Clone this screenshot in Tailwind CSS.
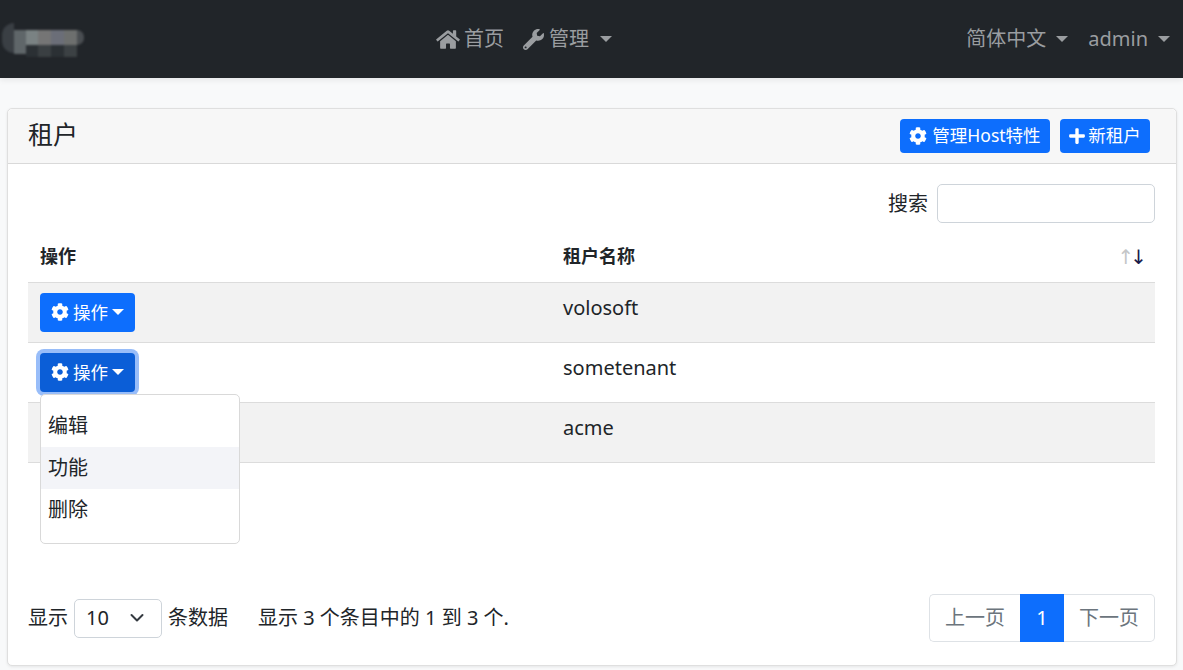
<!DOCTYPE html>
<html lang="zh-CN">

<head>
    <meta charset="UTF-8" />
    <meta name="viewport" content="width=device-width, initial-scale=1.0" />
    <title>租户</title>
    <script src="https://cdn.jsdelivr.net/npm/@tailwindcss/browser@4"></script>
</head>

<body class="bg-[#f8f9fa] text-[#212529] font-['Noto_Sans','Noto_Sans_CJK_SC',sans-serif] text-[20px] h-[670px] overflow-hidden">
    <!-- Navbar -->
    <nav class="relative h-[78px] bg-[#212529] shadow-[0_2px_6px_rgba(0,0,0,0.08)] flex items-center text-[#9a9da0]">
        <!-- blurred logo -->
        <div class="absolute left-[2px] top-[22px] w-[82px] h-[36px] flex blur-[1px]">
            <div class="w-[12px] h-[30px] mt-[1px] bg-[#3a3f44] rounded-l-full"></div>
            <div class="w-[13px] h-[24px] mt-[8px] bg-[#5f6669]"></div>
            <div class="flex flex-col">
                <div class="flex h-[15px] mt-[8px]">
                    <div class="w-[12px] bg-[#7a8283]"></div>
                    <div class="w-[13px] bg-[#757575]"></div>
                    <div class="w-[13px] bg-[#6b6e78]"></div>
                    <div class="w-[13px] bg-[#6d6f6e]"></div>
                    <div class="w-[7px] bg-[#4a4e52] rounded-r-full"></div>
                </div>
                <div class="flex h-[12px]">
                    <div class="w-[12px] bg-[#2b3034]"></div>
                    <div class="w-[13px] bg-[#3a3f42]"></div>
                    <div class="w-[13px] bg-[#2b3034]"></div>
                    <div class="w-[13px] bg-[#3c4144]"></div>
                </div>
            </div>
        </div>

        <div class="absolute left-[436px] top-[24px] flex items-center h-[30px]">
            <a class="flex items-center gap-[4px]">
                <svg class="w-[24px] h-[21px]" viewBox="0 0 576 512" fill="currentColor"><path d="M280.37 148.26L96 300.11V464a16 16 0 0 0 16 16l112.06-.29a16 16 0 0 0 15.92-16V368a16 16 0 0 1 16-16h64a16 16 0 0 1 16 16v95.64a16 16 0 0 0 16 16.05L464 480a16 16 0 0 0 16-16V300L295.67 148.26a12.19 12.19 0 0 0-15.3 0zM571.6 251.47L488 182.56V44.05a12 12 0 0 0-12-12h-56a12 12 0 0 0-12 12v72.61L318.47 43a48 48 0 0 0-61 0L4.34 251.47a12 12 0 0 0-1.6 16.9l25.5 31A12 12 0 0 0 45.15 301l235.22-193.74a12.19 12.19 0 0 1 15.3 0L530.9 301a12 12 0 0 0 16.9-1.6l25.5-31a12 12 0 0 0-1.7-16.93z"/></svg>
                <span>首页</span>
            </a>
            <a class="flex items-center gap-[5px] ml-[19px]">
                <svg class="w-[21px] h-[21px]" viewBox="0 0 512 512" fill="currentColor"><path d="M507.73 109.1c-2.24-9.03-13.54-12.09-20.12-5.51l-74.36 74.36-67.88-11.31-11.31-67.88 74.36-74.36c6.62-6.62 3.43-17.9-5.66-20.16-47.38-11.74-99.55.91-136.58 37.93-39.64 39.64-50.55 97.1-34.05 147.2L18.74 402.76c-24.99 24.99-24.99 65.51 0 90.5 24.99 24.99 65.51 24.99 90.5 0l213.21-213.21c50.12 16.71 107.47 5.68 147.37-34.22 37.07-37.07 49.7-89.32 37.91-136.73zM64 472c-13.25 0-24-10.75-24-24 0-13.26 10.75-24 24-24s24 10.74 24 24c0 13.25-10.75 24-24 24z"/></svg>
                <span>管理</span>
                <span class="ml-[6px] w-0 h-0 border-x-[6px] border-x-transparent border-t-[6px] border-t-[#9a9da0]"></span>
            </a>
        </div>

        <div class="ml-auto mr-[13px] flex items-center">
            <a class="flex items-center">
                <span>简体中文</span>
                <span class="ml-[10px] w-0 h-0 border-x-[6px] border-x-transparent border-t-[6px] border-t-[#9a9da0]"></span>
            </a>
            <a class="flex items-center ml-[20px]">
                <span>admin</span>
                <span class="ml-[10px] w-0 h-0 border-x-[6px] border-x-transparent border-t-[6px] border-t-[#9a9da0]"></span>
            </a>
        </div>
    </nav>

    <!-- Card -->
    <div class="mt-[30px] ml-[7px] w-[1170px] h-[558px] bg-white border border-[#dfdfdf] rounded-[5px] shadow-[0_1px_3px_rgba(0,0,0,0.08)] flex flex-col">
        <div class="h-[55px] shrink-0 bg-[#f7f7f7] border-b border-[#d9d9d9] rounded-t-[5px] flex items-center pl-[20px] pr-[26px]">
            <h2 class="text-[25px] leading-[30px] -mt-[4px]">租户</h2>
            <div class="ml-auto flex items-center gap-[10px] -mt-[1px]">
                <button class="h-[34px] w-[150px] bg-[#0d6efd] text-white text-[17.5px] rounded-[4px] flex items-center justify-center gap-[5px]">
                    <svg class="w-[18px] h-[18px]" viewBox="0 0 512 512" fill="currentColor"><path d="M487.4 315.7l-42.6-24.6c4.3-23.2 4.3-47 0-70.2l42.6-24.6c4.9-2.8 7.1-8.6 5.5-14-11.1-35.6-30-67.8-54.7-94.6-3.8-4.1-10-5.1-14.8-2.3L380.8 110c-17.9-15.4-38.5-27.3-60.8-35.1V25.8c0-5.6-3.9-10.5-9.4-11.7-36.7-8.2-74.3-7.8-109.2 0-5.5 1.2-9.4 6.1-9.4 11.7V75c-22.2 7.9-42.8 19.8-60.8 35.1L88.7 85.5c-4.9-2.8-11-1.9-14.8 2.3-24.7 26.7-43.6 58.9-54.7 94.6-1.7 5.4.6 11.2 5.5 14L67.3 221c-4.3 23.2-4.3 47 0 70.2l-42.6 24.6c-4.9 2.8-7.1 8.6-5.5 14 11.1 35.6 30 67.8 54.7 94.6 3.8 4.1 10 5.1 14.8 2.3l42.6-24.6c17.9 15.4 38.5 27.3 60.8 35.1v49.2c0 5.6 3.9 10.5 9.4 11.7 36.7 8.2 74.3 7.8 109.2 0 5.5-1.2 9.4-6.1 9.4-11.7v-49.2c22.2-7.9 42.8-19.8 60.8-35.1l42.6 24.6c4.9 2.8 11 1.9 14.8-2.3 24.7-26.7 43.6-58.9 54.7-94.6 1.5-5.5-.7-11.3-5.6-14.1zM256 336c-44.1 0-80-35.9-80-80s35.9-80 80-80 80 35.9 80 80-35.9 80-80 80z"/></svg>
                    <span>管理Host特性</span>
                </button>
                <button class="h-[34px] w-[90px] bg-[#0d6efd] text-white text-[17.5px] rounded-[4px] flex items-center justify-center gap-[3px]">
                    <svg class="w-[16px] h-[18px]" viewBox="0 0 448 512" fill="currentColor"><path d="M416 208H272V64c0-17.67-14.33-32-32-32h-32c-17.67 0-32 14.33-32 32v144H32c-17.67 0-32 14.33-32 32v32c0 17.67 14.33 32 32 32h144v144c0 17.67 14.33 32 32 32h32c17.67 0 32-14.33 32-32V304h144c17.67 0 32-14.33 32-32v-32c0-17.67-14.33-32-32-32z"/></svg>
                    <span>新租户</span>
                </button>
            </div>
        </div>

        <div class="flex-1 flex flex-col pl-[20px] pr-[21px]">
            <div class="mt-[20px] flex justify-end items-center gap-[9px]">
                <label>搜索</label>
                <input class="w-[218px] h-[39px] bg-white border border-[#ced4da] rounded-[5px]" />
            </div>

            <table class="relative mt-[9px] w-full table-fixed border-collapse">
                <thead>
                    <tr class="h-[50px] border-b border-[#dcdcdc]">
                        <th class="w-[523px] pl-[12px] text-left font-bold text-[18px]">操作</th>
                        <th class="pl-[12px] text-left font-bold text-[18px]">
                            <div class="flex items-center justify-between pr-[8px]">
                                <span>租户名称</span>
                                <span class="flex text-[20px] leading-none font-normal font-['DejaVu_Sans',sans-serif] tracking-[-4px] pr-[4px]"><span class="text-[#c4c6c8]">↑</span><span class="text-[#1b1b4b]">↓</span></span>
                            </div>
                        </th>
                    </tr>
                </thead>
                <tbody>
                    <tr class="h-[60px] bg-[#f2f2f2] border-b border-[#dcdcdc]">
                        <td class="pl-[12px] align-top pt-[10px]">
                            <button class="h-[39px] w-[95px] bg-[#0d6efd] text-white text-[17.5px] rounded-[4px] flex items-center justify-center gap-[4px]">
                                <svg class="w-[18px] h-[18px]" viewBox="0 0 512 512" fill="currentColor"><path d="M487.4 315.7l-42.6-24.6c4.3-23.2 4.3-47 0-70.2l42.6-24.6c4.9-2.8 7.1-8.6 5.5-14-11.1-35.6-30-67.8-54.7-94.6-3.8-4.1-10-5.1-14.8-2.3L380.8 110c-17.9-15.4-38.5-27.3-60.8-35.1V25.8c0-5.6-3.9-10.5-9.4-11.7-36.7-8.2-74.3-7.8-109.2 0-5.5 1.2-9.4 6.1-9.4 11.7V75c-22.2 7.9-42.8 19.8-60.8 35.1L88.7 85.5c-4.9-2.8-11-1.9-14.8 2.3-24.7 26.7-43.6 58.9-54.7 94.6-1.7 5.4.6 11.2 5.5 14L67.3 221c-4.3 23.2-4.3 47 0 70.2l-42.6 24.6c-4.9 2.8-7.1 8.6-5.5 14 11.1 35.6 30 67.8 54.7 94.6 3.8 4.1 10 5.1 14.8 2.3l42.6-24.6c17.9 15.4 38.5 27.3 60.8 35.1v49.2c0 5.6 3.9 10.5 9.4 11.7 36.7 8.2 74.3 7.8 109.2 0 5.5-1.2 9.4-6.1 9.4-11.7v-49.2c22.2-7.9 42.8-19.8 60.8-35.1l42.6 24.6c4.9 2.8 11 1.9 14.8-2.3 24.7-26.7 43.6-58.9 54.7-94.6 1.5-5.5-.7-11.3-5.6-14.1zM256 336c-44.1 0-80-35.9-80-80s35.9-80 80-80 80 35.9 80 80-35.9 80-80 80z"/></svg>
                                <span>操作</span>
                                <span class="w-0 h-0 border-x-[6px] border-x-transparent border-t-[6px] border-t-white"></span>
                            </button>
                        </td>
                        <td class="pl-[12px] align-top pt-[10px]">volosoft</td>
                    </tr>
                    <tr class="h-[60px] border-b border-[#dcdcdc]">
                        <td class="pl-[12px] align-top pt-[10px] relative">
                            <button class="h-[39px] w-[95px] bg-[#0b5ed7] text-white text-[17.5px] rounded-[4px] ring-[4px] ring-[#98bdf9] flex items-center justify-center gap-[4px]">
                                <svg class="w-[18px] h-[18px]" viewBox="0 0 512 512" fill="currentColor"><path d="M487.4 315.7l-42.6-24.6c4.3-23.2 4.3-47 0-70.2l42.6-24.6c4.9-2.8 7.1-8.6 5.5-14-11.1-35.6-30-67.8-54.7-94.6-3.8-4.1-10-5.1-14.8-2.3L380.8 110c-17.9-15.4-38.5-27.3-60.8-35.1V25.8c0-5.6-3.9-10.5-9.4-11.7-36.7-8.2-74.3-7.8-109.2 0-5.5 1.2-9.4 6.1-9.4 11.7V75c-22.2 7.9-42.8 19.8-60.8 35.1L88.7 85.5c-4.9-2.8-11-1.9-14.8 2.3-24.7 26.7-43.6 58.9-54.7 94.6-1.7 5.4.6 11.2 5.5 14L67.3 221c-4.3 23.2-4.3 47 0 70.2l-42.6 24.6c-4.9 2.8-7.1 8.6-5.5 14 11.1 35.6 30 67.8 54.7 94.6 3.8 4.1 10 5.1 14.8 2.3l42.6-24.6c17.9 15.4 38.5 27.3 60.8 35.1v49.2c0 5.6 3.9 10.5 9.4 11.7 36.7 8.2 74.3 7.8 109.2 0 5.5-1.2 9.4-6.1 9.4-11.7v-49.2c22.2-7.9 42.8-19.8 60.8-35.1l42.6 24.6c4.9 2.8 11 1.9 14.8-2.3 24.7-26.7 43.6-58.9 54.7-94.6 1.5-5.5-.7-11.3-5.6-14.1zM256 336c-44.1 0-80-35.9-80-80s35.9-80 80-80 80 35.9 80 80-35.9 80-80 80z"/></svg>
                                <span>操作</span>
                                <span class="w-0 h-0 border-x-[6px] border-x-transparent border-t-[6px] border-t-white"></span>
                            </button>
                            <!-- open dropdown -->
                            <div class="absolute z-10 left-[12px] top-[51px] w-[200px] h-[150px] bg-white border border-[#d9d9d9] rounded-[5px] pt-[10px] text-[#212529]">
                                <div class="h-[42px] pl-[7px] flex items-center">编辑</div>
                                <div class="h-[42px] pl-[7px] flex items-center bg-[#f3f4f8]">功能</div>
                                <div class="h-[42px] pl-[7px] flex items-center">删除</div>
                            </div>
                        </td>
                        <td class="pl-[12px] align-top pt-[10px]">sometenant</td>
                    </tr>
                    <tr class="h-[60px] bg-[#f2f2f2] border-b border-[#dcdcdc]">
                        <td class="pl-[12px] align-top pt-[10px]">
                            <button class="h-[39px] w-[95px] bg-[#0d6efd] rounded-[4px]"></button>
                        </td>
                        <td class="pl-[12px] align-top pt-[10px]">acme</td>
                    </tr>
                </tbody>
            </table>

            <!-- footer -->
            <div class="mt-auto mb-[23px] flex items-center h-[48px]">
                <span>显示</span>
                <div class="ml-[6px] w-[88px] h-[39px] border border-[#ced4da] rounded-[5px] flex items-center justify-between pl-[11px] pr-[17px]">
                    <span>10</span>
                    <svg class="w-[14px] h-[10px]" viewBox="0 0 14 10" fill="none" stroke="#343a40" stroke-width="2" stroke-linecap="round" stroke-linejoin="round"><path d="M1.5 2l5.5 5.5L12.5 2"/></svg>
                </div>
                <span class="ml-[6px]">条数据</span>
                <span class="ml-[30px]">显示 3 个条目中的 1 到 3 个.</span>

                <div class="ml-auto flex h-[48px] text-[#6c757d]">
                    <a class="w-[91px] border border-[#dee2e6] border-r-0 rounded-l-[5px] flex items-center justify-center">上一页</a>
                    <a class="w-[44px] bg-[#0d6efd] text-white flex items-center justify-center">1</a>
                    <a class="w-[91px] border border-[#dee2e6] border-l-0 rounded-r-[5px] flex items-center justify-center">下一页</a>
                </div>
            </div>
        </div>
    </div>
</body>

</html>
